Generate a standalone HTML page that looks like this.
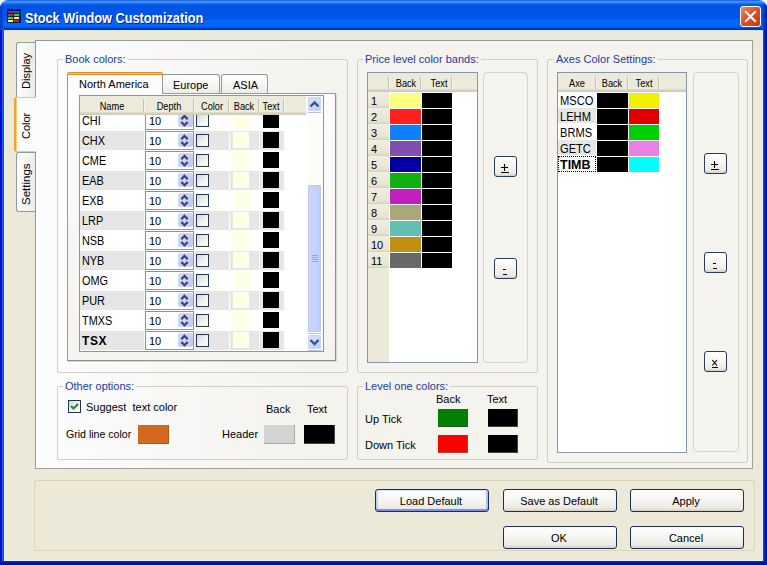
<!DOCTYPE html>
<html><head><meta charset="utf-8">
<style>
*{box-sizing:border-box;margin:0;padding:0}
html,body{width:767px;height:565px;overflow:hidden;background:#FFFFFF}
body{position:relative;font-family:"Liberation Sans",sans-serif;font-size:11px;color:#000}
.a{position:absolute}
.t{position:absolute;white-space:pre;line-height:1}
#frame{left:0;top:30px;width:767px;height:535px;
 background:linear-gradient(to right,#0010C0 0,#0010C0 2px,#2060F5 2px,#2060F5 3px,#1848C8 3px,#1848C8 4px,transparent 4px)}
#title{left:0;top:0;width:767px;height:30px;border-radius:8px 8px 0 0;
 background:linear-gradient(to bottom,#0A47D0 0,#3C8CF8 1px,#3D95FF 2px,#2A7EF5 3px,#1266EC 4px,#0055E5 5px,#0055E5 17px,#0058EE 19px,#0066FF 21px,#0066FF 26px,#0060F5 27px,#0048D6 28px,#0035B0 29px,#0035B0 30px)}
#client{left:4px;top:30px;width:759px;height:531px;background:#ECE9D8;
 border-left:1px solid #F0F4FF;border-top:1px solid #D8E4F8;border-right:1px solid #E8F0FF;border-bottom:1px solid #E8F0FF}
#rightb{left:763px;top:30px;width:4px;height:535px;background:linear-gradient(to right,#1848C8 0,#1040C8 1px,#0018A0 2px,#0010A0 4px)}
#botb{left:0;top:561px;width:767px;height:4px;background:linear-gradient(to bottom,#1848C8 0,#0018A0 1px,#0010A0 4px)}
.grp{position:absolute;border:1px solid #D0CFC6;border-radius:2px}
.gl{position:absolute;white-space:pre;line-height:1;color:#1C3C9E;padding:0 2px;margin-top:-1px}
.tabv{position:absolute;border:1px solid #919B9C;border-right:none;border-radius:3px 0 0 3px;
 background:linear-gradient(to right,#FFFFFF,#ECEBE6)}
.rot{position:absolute;white-space:pre;line-height:1;transform-origin:0 0;transform:rotate(-90deg)}
.htab{position:absolute;border:1px solid #919B9C;border-bottom:none;border-radius:3px 3px 0 0;background:linear-gradient(to bottom,#FFFFFF,#ECEBE6)}
.grid{position:absolute;border:1px solid #8797AB;background:#fff;overflow:hidden}
.hdr{position:absolute;background:#EBEADB}
.hdr:after{content:"";position:absolute;left:0;right:0;bottom:0;height:3px;background:linear-gradient(#E2DFCF,#D6D2C1,#C9C5B3)}
.hdiv{position:absolute;width:2px;background:linear-gradient(to right,#C4C1AE 1px,#F6F5EE 1px)}
.sw{position:absolute}
.btn{position:absolute;border:1px solid #003C74;border-radius:3px;
 background:linear-gradient(to bottom,#FFFFFF 0,#F7F7F4 40%,#ECEBE6 85%,#D6D0C5 100%);text-align:center;line-height:1}
.pnl{position:absolute;border:1px solid #D5D3C6;border-radius:4px}
.cb{position:absolute;width:13px;height:13px;border:1px solid #22384F;background:linear-gradient(135deg,#D2D6DA 0,#F4F4F2 60%,#FFFAF2 100%)}
.spin{position:absolute;width:49px;height:19px;border:1px solid #8294A8;background:#fff}
.spin .v{position:absolute;left:3px;top:4px;white-space:pre;line-height:1}
.spin .b{position:absolute;left:32px;top:1px;width:15px;height:14px;border-radius:2px;background:linear-gradient(135deg,#D6DBF8,#C2C9F2)}
</style></head><body>
<div id="frame" class="a"></div>
<div id="title" class="a"></div>
<div id="rightb" class="a"></div>
<div id="botb" class="a"></div>
<div id="client" class="a"></div>
<div class="a" style="left:0;top:6px;width:4px;height:24px;background:linear-gradient(to right,#0838C0 0,#0A44D4 2px,#0A58EC 4px)"></div>
<div class="a" style="left:762px;top:4px;width:5px;height:26px;background:linear-gradient(to right,#0A5AF0 0,#0046D8 1px,#0030B8 3px,#0020A0 5px);border-top-right-radius:4px"></div>

<!-- title icon -->
<div class="a" style="left:7px;top:9px;width:14px;height:14px;background:#0A1A60;border-radius:1px"></div>
<div class="a" style="left:8px;top:11px;width:12px;height:2px;background:#2D4FA8"></div>
<div class="a" style="left:8px;top:14px;width:5px;height:2px;background:#E02030"></div>
<div class="a" style="left:14px;top:14px;width:5px;height:2px;background:#20E030"></div>
<div class="a" style="left:8px;top:17px;width:5px;height:2px;background:#30E030"></div>
<div class="a" style="left:14px;top:17px;width:5px;height:2px;background:#FFF060"></div>
<div class="a" style="left:8px;top:20px;width:5px;height:2px;background:#FFF060"></div>
<div class="a" style="left:14px;top:20px;width:5px;height:2px;background:#C03010"></div>
<div class="t" style="left:25px;top:10.5px;font-size:14px;transform-origin:0 0;transform:scaleX(0.91);font-weight:bold;color:#fff;text-shadow:1px 1px 0 #0A1E8A">Stock Window Customization</div>
<!-- close button -->
<div class="a" style="left:740px;top:6px;width:21px;height:21px;border:1px solid #fff;border-radius:3px;background:linear-gradient(135deg,#F08A6A 0,#E0502A 45%,#C83810 100%)">
 <svg class="a" style="left:0;top:0" width="19" height="19" viewBox="0 0 19 19"><path d="M5 5 L14 14 M14 5 L5 14" stroke="#fff" stroke-width="2.2" stroke-linecap="square"/></svg>
</div>

<!-- vertical tabs -->
<div class="tabv" style="left:16px;top:42px;width:20px;height:57px"></div>
<div class="rot" style="left:21px;top:89px;">Display</div>
<div class="tabv" style="left:16px;top:152px;width:20px;height:60px"></div>
<div class="rot" style="left:21px;top:205px;font-size:11.5px">Settings</div>

<!-- tab page -->
<div class="a" style="left:35px;top:40px;width:718px;height:429px;border:1px solid #919B9C;border-right:1px solid #A0A09C;border-bottom:1px solid #A0A09C;background:linear-gradient(to right,#FCFCFE 0,#F4F3EE 280px,#F4F3EE 100%)"></div>
<!-- selected Color tab -->
<div class="a" style="left:14px;top:97px;width:23px;height:55px;background:linear-gradient(to right,#FFFFFF,#FCFCFE);border-radius:3px 0 0 3px;border-left:2px solid #EDA43A;box-shadow:inset 1px 0 0 #FFCF6E"></div>
<div class="a" style="left:16px;top:97px;width:20px;height:1px;background:#C8CCC8"></div>
<div class="a" style="left:16px;top:151px;width:20px;height:1px;background:#C8CCC8"></div>
<div class="rot" style="left:21px;top:139px;">Color</div>

<div class="grp" style="left:57px;top:59px;width:291px;height:314px"></div>
<div class="gl" style="left:63px;top:55px;background:#FBFBFB">Book colors:</div>
<div class="htab" style="left:162px;top:74px;width:58px;height:20px"></div>
<div class="t" style="left:173px;top:80px;">Europe</div>
<div class="htab" style="left:221px;top:74px;width:47px;height:20px"></div>
<div class="t" style="left:233px;top:80px;">ASIA</div>
<div class="a" style="left:67px;top:93px;width:269px;height:268px;border:1px solid #919B9C;border-right-color:#8A8F90;border-bottom-color:#8A8F90;box-shadow:1px 1px 0 #D8D8D0;background:linear-gradient(to bottom,#FCFCFE 0,#F4F3EE 100%)"></div>
<div class="a" style="left:67px;top:72px;width:96px;height:22px;border:1px solid #919B9C;border-bottom:none;border-top:none;border-radius:3px 3px 0 0;background:#FCFCFE"></div>
<div class="a" style="left:67px;top:72px;width:96px;height:3px;background:#E68B2C;border-radius:3px 3px 0 0;border-top:1px solid #E68B2C"></div>
<div class="a" style="left:68px;top:73px;width:94px;height:1px;background:#FFC73C"></div>
<div class="t" style="left:79px;top:79px;">North America</div>
<div class="grid" style="left:79px;top:95px;width:245px;height:257px">
<div class="t" style="left:2px;top:19px;font-size:12.5px;transform-origin:0 0;transform:scaleX(0.87);">CHI</div>
<div class="spin" style="left:65px;top:15px"><div class="v">10</div><div class="b"></div><svg class="a" style="left:33px;top:1px" width="13" height="14" viewBox="0 0 13 14"><path d="M2.3 6.2 L5.5 3 L8.7 6.2 M2.3 9 L5.5 12.2 L8.7 9" fill="none" stroke="#3A4674" stroke-width="2.3"/></svg></div>
<div class="cb" style="left:116px;top:18px"></div>
<div class="a" style="left:153px;top:16px;width:16px;height:16px;background:#FFFFE3"></div>
<div class="a" style="left:183px;top:16px;width:16px;height:16px;background:#000"></div>
<div class="a" style="left:0px;top:35px;width:64px;height:19px;background:#E6E6E6"></div>
<div class="a" style="left:115px;top:35px;width:34px;height:19px;background:#E6E6E6"></div>
<div class="a" style="left:150px;top:35px;width:29px;height:19px;background:#E6E6E6"></div>
<div class="a" style="left:180px;top:35px;width:24px;height:19px;background:#E6E6E6"></div>
<div class="t" style="left:2px;top:39px;font-size:12.5px;transform-origin:0 0;transform:scaleX(0.87);">CHX</div>
<div class="spin" style="left:65px;top:35px"><div class="v">10</div><div class="b"></div><svg class="a" style="left:33px;top:1px" width="13" height="14" viewBox="0 0 13 14"><path d="M2.3 6.2 L5.5 3 L8.7 6.2 M2.3 9 L5.5 12.2 L8.7 9" fill="none" stroke="#3A4674" stroke-width="2.3"/></svg></div>
<div class="cb" style="left:116px;top:38px"></div>
<div class="a" style="left:153px;top:36px;width:16px;height:16px;background:#FFFFE3"></div>
<div class="a" style="left:183px;top:36px;width:16px;height:16px;background:#000"></div>
<div class="t" style="left:2px;top:59px;font-size:12.5px;transform-origin:0 0;transform:scaleX(0.87);">CME</div>
<div class="spin" style="left:65px;top:55px"><div class="v">10</div><div class="b"></div><svg class="a" style="left:33px;top:1px" width="13" height="14" viewBox="0 0 13 14"><path d="M2.3 6.2 L5.5 3 L8.7 6.2 M2.3 9 L5.5 12.2 L8.7 9" fill="none" stroke="#3A4674" stroke-width="2.3"/></svg></div>
<div class="cb" style="left:116px;top:58px"></div>
<div class="a" style="left:153px;top:56px;width:16px;height:16px;background:#FFFFE3"></div>
<div class="a" style="left:183px;top:56px;width:16px;height:16px;background:#000"></div>
<div class="a" style="left:0px;top:75px;width:64px;height:19px;background:#E6E6E6"></div>
<div class="a" style="left:115px;top:75px;width:34px;height:19px;background:#E6E6E6"></div>
<div class="a" style="left:150px;top:75px;width:29px;height:19px;background:#E6E6E6"></div>
<div class="a" style="left:180px;top:75px;width:24px;height:19px;background:#E6E6E6"></div>
<div class="t" style="left:2px;top:79px;font-size:12.5px;transform-origin:0 0;transform:scaleX(0.87);">EAB</div>
<div class="spin" style="left:65px;top:75px"><div class="v">10</div><div class="b"></div><svg class="a" style="left:33px;top:1px" width="13" height="14" viewBox="0 0 13 14"><path d="M2.3 6.2 L5.5 3 L8.7 6.2 M2.3 9 L5.5 12.2 L8.7 9" fill="none" stroke="#3A4674" stroke-width="2.3"/></svg></div>
<div class="cb" style="left:116px;top:78px"></div>
<div class="a" style="left:153px;top:76px;width:16px;height:16px;background:#FFFFE3"></div>
<div class="a" style="left:183px;top:76px;width:16px;height:16px;background:#000"></div>
<div class="t" style="left:2px;top:99px;font-size:12.5px;transform-origin:0 0;transform:scaleX(0.87);">EXB</div>
<div class="spin" style="left:65px;top:95px"><div class="v">10</div><div class="b"></div><svg class="a" style="left:33px;top:1px" width="13" height="14" viewBox="0 0 13 14"><path d="M2.3 6.2 L5.5 3 L8.7 6.2 M2.3 9 L5.5 12.2 L8.7 9" fill="none" stroke="#3A4674" stroke-width="2.3"/></svg></div>
<div class="cb" style="left:116px;top:98px"></div>
<div class="a" style="left:153px;top:96px;width:16px;height:16px;background:#FFFFE3"></div>
<div class="a" style="left:183px;top:96px;width:16px;height:16px;background:#000"></div>
<div class="a" style="left:0px;top:115px;width:64px;height:19px;background:#E6E6E6"></div>
<div class="a" style="left:115px;top:115px;width:34px;height:19px;background:#E6E6E6"></div>
<div class="a" style="left:150px;top:115px;width:29px;height:19px;background:#E6E6E6"></div>
<div class="a" style="left:180px;top:115px;width:24px;height:19px;background:#E6E6E6"></div>
<div class="t" style="left:2px;top:119px;font-size:12.5px;transform-origin:0 0;transform:scaleX(0.87);">LRP</div>
<div class="spin" style="left:65px;top:115px"><div class="v">10</div><div class="b"></div><svg class="a" style="left:33px;top:1px" width="13" height="14" viewBox="0 0 13 14"><path d="M2.3 6.2 L5.5 3 L8.7 6.2 M2.3 9 L5.5 12.2 L8.7 9" fill="none" stroke="#3A4674" stroke-width="2.3"/></svg></div>
<div class="cb" style="left:116px;top:118px"></div>
<div class="a" style="left:153px;top:116px;width:16px;height:16px;background:#FFFFE3"></div>
<div class="a" style="left:183px;top:116px;width:16px;height:16px;background:#000"></div>
<div class="t" style="left:2px;top:139px;font-size:12.5px;transform-origin:0 0;transform:scaleX(0.87);">NSB</div>
<div class="spin" style="left:65px;top:135px"><div class="v">10</div><div class="b"></div><svg class="a" style="left:33px;top:1px" width="13" height="14" viewBox="0 0 13 14"><path d="M2.3 6.2 L5.5 3 L8.7 6.2 M2.3 9 L5.5 12.2 L8.7 9" fill="none" stroke="#3A4674" stroke-width="2.3"/></svg></div>
<div class="cb" style="left:116px;top:138px"></div>
<div class="a" style="left:153px;top:136px;width:16px;height:16px;background:#FFFFE3"></div>
<div class="a" style="left:183px;top:136px;width:16px;height:16px;background:#000"></div>
<div class="a" style="left:0px;top:155px;width:64px;height:19px;background:#E6E6E6"></div>
<div class="a" style="left:115px;top:155px;width:34px;height:19px;background:#E6E6E6"></div>
<div class="a" style="left:150px;top:155px;width:29px;height:19px;background:#E6E6E6"></div>
<div class="a" style="left:180px;top:155px;width:24px;height:19px;background:#E6E6E6"></div>
<div class="t" style="left:2px;top:159px;font-size:12.5px;transform-origin:0 0;transform:scaleX(0.87);">NYB</div>
<div class="spin" style="left:65px;top:155px"><div class="v">10</div><div class="b"></div><svg class="a" style="left:33px;top:1px" width="13" height="14" viewBox="0 0 13 14"><path d="M2.3 6.2 L5.5 3 L8.7 6.2 M2.3 9 L5.5 12.2 L8.7 9" fill="none" stroke="#3A4674" stroke-width="2.3"/></svg></div>
<div class="cb" style="left:116px;top:158px"></div>
<div class="a" style="left:153px;top:156px;width:16px;height:16px;background:#FFFFE3"></div>
<div class="a" style="left:183px;top:156px;width:16px;height:16px;background:#000"></div>
<div class="t" style="left:2px;top:179px;font-size:12.5px;transform-origin:0 0;transform:scaleX(0.87);">OMG</div>
<div class="spin" style="left:65px;top:175px"><div class="v">10</div><div class="b"></div><svg class="a" style="left:33px;top:1px" width="13" height="14" viewBox="0 0 13 14"><path d="M2.3 6.2 L5.5 3 L8.7 6.2 M2.3 9 L5.5 12.2 L8.7 9" fill="none" stroke="#3A4674" stroke-width="2.3"/></svg></div>
<div class="cb" style="left:116px;top:178px"></div>
<div class="a" style="left:153px;top:176px;width:16px;height:16px;background:#FFFFE3"></div>
<div class="a" style="left:183px;top:176px;width:16px;height:16px;background:#000"></div>
<div class="a" style="left:0px;top:195px;width:64px;height:19px;background:#E6E6E6"></div>
<div class="a" style="left:115px;top:195px;width:34px;height:19px;background:#E6E6E6"></div>
<div class="a" style="left:150px;top:195px;width:29px;height:19px;background:#E6E6E6"></div>
<div class="a" style="left:180px;top:195px;width:24px;height:19px;background:#E6E6E6"></div>
<div class="t" style="left:2px;top:199px;font-size:12.5px;transform-origin:0 0;transform:scaleX(0.87);">PUR</div>
<div class="spin" style="left:65px;top:195px"><div class="v">10</div><div class="b"></div><svg class="a" style="left:33px;top:1px" width="13" height="14" viewBox="0 0 13 14"><path d="M2.3 6.2 L5.5 3 L8.7 6.2 M2.3 9 L5.5 12.2 L8.7 9" fill="none" stroke="#3A4674" stroke-width="2.3"/></svg></div>
<div class="cb" style="left:116px;top:198px"></div>
<div class="a" style="left:153px;top:196px;width:16px;height:16px;background:#FFFFE3"></div>
<div class="a" style="left:183px;top:196px;width:16px;height:16px;background:#000"></div>
<div class="t" style="left:2px;top:219px;font-size:12.5px;transform-origin:0 0;transform:scaleX(0.87);">TMXS</div>
<div class="spin" style="left:65px;top:215px"><div class="v">10</div><div class="b"></div><svg class="a" style="left:33px;top:1px" width="13" height="14" viewBox="0 0 13 14"><path d="M2.3 6.2 L5.5 3 L8.7 6.2 M2.3 9 L5.5 12.2 L8.7 9" fill="none" stroke="#3A4674" stroke-width="2.3"/></svg></div>
<div class="cb" style="left:116px;top:218px"></div>
<div class="a" style="left:153px;top:216px;width:16px;height:16px;background:#FFFFE3"></div>
<div class="a" style="left:183px;top:216px;width:16px;height:16px;background:#000"></div>
<div class="a" style="left:0px;top:235px;width:64px;height:19px;background:#E6E6E6"></div>
<div class="a" style="left:115px;top:235px;width:34px;height:19px;background:#E6E6E6"></div>
<div class="a" style="left:150px;top:235px;width:29px;height:19px;background:#E6E6E6"></div>
<div class="a" style="left:180px;top:235px;width:24px;height:19px;background:#E6E6E6"></div>
<div class="t" style="left:2px;top:239px;font-size:12px;font-weight:bold;letter-spacing:0.6px;">TSX</div>
<div class="spin" style="left:65px;top:235px"><div class="v">10</div><div class="b"></div><svg class="a" style="left:33px;top:1px" width="13" height="14" viewBox="0 0 13 14"><path d="M2.3 6.2 L5.5 3 L8.7 6.2 M2.3 9 L5.5 12.2 L8.7 9" fill="none" stroke="#3A4674" stroke-width="2.3"/></svg></div>
<div class="cb" style="left:116px;top:238px"></div>
<div class="a" style="left:153px;top:236px;width:16px;height:16px;background:#FFFFE3"></div>
<div class="a" style="left:183px;top:236px;width:16px;height:16px;background:#000"></div>
<div class="hdr" style="left:0;top:0;width:226px;height:19px"></div>
<div class="hdiv" style="left:63px;top:3px;height:13px"></div>
<div class="hdiv" style="left:113px;top:3px;height:13px"></div>
<div class="hdiv" style="left:148px;top:3px;height:13px"></div>
<div class="hdiv" style="left:178px;top:3px;height:13px"></div>
<div class="hdiv" style="left:203px;top:3px;height:13px"></div>
<div class="t" style="left:2px;width:60px;text-align:center;top:6px;font-size:10px;transform:scaleX(0.92)">Name</div>
<div class="t" style="left:59px;width:60px;text-align:center;top:6px;font-size:10px;transform:scaleX(0.92)">Depth</div>
<div class="t" style="left:101.5px;width:60px;text-align:center;top:6px;font-size:10px;transform:scaleX(0.92)">Color</div>
<div class="t" style="left:134px;width:60px;text-align:center;top:6px;font-size:10px;transform:scaleX(0.92)">Back</div>
<div class="t" style="left:161px;width:60px;text-align:center;top:6px;font-size:10px;transform:scaleX(0.92)">Text</div>
<div class="a" style="left:226px;top:0px;width:17px;height:255px;background:#FCFCF9"></div>
<div class="a" style="left:227px;top:0px;width:15px;height:16px;border:1px solid #fff;border-radius:2px;box-shadow:inset 0 0 0 1px #C8D4F4,0 1px 0 #B8C4DC;background:linear-gradient(135deg,#DCE5FD 0,#C6D5FD 60%,#B7C9F5 100%)"><svg class="a" style="left:-1px;top:-1px" width="15" height="16" viewBox="0 0 15 16"><path d="M3.5 10.5 L7.5 6.5 L11.5 10.5" fill="none" stroke="#3F5080" stroke-width="2.3"/></svg></div>
<div class="a" style="left:227px;top:238px;width:15px;height:16px;border:1px solid #fff;border-radius:2px;box-shadow:inset 0 0 0 1px #C8D4F4,0 1px 0 #B8C4DC;background:linear-gradient(135deg,#DCE5FD 0,#C6D5FD 60%,#B7C9F5 100%)"><svg class="a" style="left:-1px;top:-1px" width="15" height="16" viewBox="0 0 15 16"><path d="M3.5 6 L7.5 10 L11.5 6" fill="none" stroke="#3F5080" stroke-width="2.3"/></svg></div>
<div class="a" style="left:227px;top:88px;width:15px;height:149px;border:1px solid #fff;border-radius:2px;box-shadow:inset 0 0 0 1px #B9C9F0,0 1px 0 #B8C4DC;background:linear-gradient(to right,#CAD4FA 0,#C6D3FC 50%,#B9CCF9 100%)"></div>
<div class="a" style="left:232px;top:159px;width:6px;height:1px;background:#8CA6E8"></div>
<div class="a" style="left:232px;top:161px;width:6px;height:1px;background:#8CA6E8"></div>
<div class="a" style="left:232px;top:163px;width:6px;height:1px;background:#8CA6E8"></div>
<div class="a" style="left:232px;top:165px;width:6px;height:1px;background:#8CA6E8"></div>
</div>
<div class="grp" style="left:57px;top:386px;width:291px;height:74px"></div>
<div class="gl" style="left:63px;top:382px;background:#F9F9F8">Other options:</div>
<div class="cb" style="left:68px;top:400px"></div>
<svg class="a" style="left:68px;top:400px" width="13" height="13" viewBox="0 0 13 13"><path d="M3 6 L5.5 8.5 L10 4" fill="none" stroke="#2A8A3A" stroke-width="2.2"/></svg>
<div class="t" style="left:86px;top:402px;">Suggest  text color</div>
<div class="t" style="left:66px;top:429px;transform-origin:0 0;transform:scaleX(0.96)">Grid line color</div>
<div class="a" style="left:138px;top:425px;width:31px;height:19px;background:#D2691E;border-right:1px solid #A85A20;border-bottom:1px solid #A85A20"></div>
<div class="t" style="left:266px;top:404px;">Back</div>
<div class="t" style="left:307px;top:404px;">Text</div>
<div class="t" style="left:222px;top:429px;">Header</div>
<div class="a" style="left:264px;top:425px;width:31px;height:19px;background:#D3D3D3;border-right:1px solid #A8A8A8;border-bottom:1px solid #A8A8A8"></div>
<div class="a" style="left:304px;top:425px;width:31px;height:19px;background:#000;border-right:1px solid #444;border-bottom:1px solid #444"></div>
<div class="grp" style="left:357px;top:59px;width:181px;height:314px"></div>
<div class="gl" style="left:363px;top:55px;background:#F4F3EE">Price level color bands:</div>
<div class="grid" style="left:367px;top:72px;width:111px;height:291px">
<div class="a" style="left:0px;top:0px;width:21px;height:289px;background:#ECE9D8"></div>
<div class="a" style="left:0px;top:19px;width:21px;height:16px;background:linear-gradient(to bottom,#F0EEE0 0,#E8E5D4 80%,#D6D2BF 100%)"></div>
<div class="t" style="left:3px;top:23px;font-size:11px">1</div>
<div class="a" style="left:22px;top:20px;width:31px;height:15px;background:#FFFF80"></div>
<div class="a" style="left:54px;top:20px;width:30px;height:15px;background:#000"></div>
<div class="a" style="left:0px;top:35px;width:21px;height:16px;background:linear-gradient(to bottom,#F0EEE0 0,#E8E5D4 80%,#D6D2BF 100%)"></div>
<div class="t" style="left:3px;top:39px;font-size:11px">2</div>
<div class="a" style="left:22px;top:36px;width:31px;height:15px;background:#FF2020"></div>
<div class="a" style="left:54px;top:36px;width:30px;height:15px;background:#000"></div>
<div class="a" style="left:0px;top:51px;width:21px;height:16px;background:linear-gradient(to bottom,#F0EEE0 0,#E8E5D4 80%,#D6D2BF 100%)"></div>
<div class="t" style="left:3px;top:55px;font-size:11px">3</div>
<div class="a" style="left:22px;top:52px;width:31px;height:15px;background:#1080FF"></div>
<div class="a" style="left:54px;top:52px;width:30px;height:15px;background:#000"></div>
<div class="a" style="left:0px;top:67px;width:21px;height:16px;background:linear-gradient(to bottom,#F0EEE0 0,#E8E5D4 80%,#D6D2BF 100%)"></div>
<div class="t" style="left:3px;top:71px;font-size:11px">4</div>
<div class="a" style="left:22px;top:68px;width:31px;height:15px;background:#8050B0"></div>
<div class="a" style="left:54px;top:68px;width:30px;height:15px;background:#000"></div>
<div class="a" style="left:0px;top:83px;width:21px;height:16px;background:linear-gradient(to bottom,#F0EEE0 0,#E8E5D4 80%,#D6D2BF 100%)"></div>
<div class="t" style="left:3px;top:87px;font-size:11px">5</div>
<div class="a" style="left:22px;top:84px;width:31px;height:15px;background:#0000A0"></div>
<div class="a" style="left:54px;top:84px;width:30px;height:15px;background:#000"></div>
<div class="a" style="left:0px;top:99px;width:21px;height:16px;background:linear-gradient(to bottom,#F0EEE0 0,#E8E5D4 80%,#D6D2BF 100%)"></div>
<div class="t" style="left:3px;top:103px;font-size:11px">6</div>
<div class="a" style="left:22px;top:100px;width:31px;height:15px;background:#10B010"></div>
<div class="a" style="left:54px;top:100px;width:30px;height:15px;background:#000"></div>
<div class="a" style="left:0px;top:115px;width:21px;height:16px;background:linear-gradient(to bottom,#F0EEE0 0,#E8E5D4 80%,#D6D2BF 100%)"></div>
<div class="t" style="left:3px;top:119px;font-size:11px">7</div>
<div class="a" style="left:22px;top:116px;width:31px;height:15px;background:#C020C0"></div>
<div class="a" style="left:54px;top:116px;width:30px;height:15px;background:#000"></div>
<div class="a" style="left:0px;top:131px;width:21px;height:16px;background:linear-gradient(to bottom,#F0EEE0 0,#E8E5D4 80%,#D6D2BF 100%)"></div>
<div class="t" style="left:3px;top:135px;font-size:11px">8</div>
<div class="a" style="left:22px;top:132px;width:31px;height:15px;background:#A8A878"></div>
<div class="a" style="left:54px;top:132px;width:30px;height:15px;background:#000"></div>
<div class="a" style="left:0px;top:147px;width:21px;height:16px;background:linear-gradient(to bottom,#F0EEE0 0,#E8E5D4 80%,#D6D2BF 100%)"></div>
<div class="t" style="left:3px;top:151px;font-size:11px">9</div>
<div class="a" style="left:22px;top:148px;width:31px;height:15px;background:#60C0B0"></div>
<div class="a" style="left:54px;top:148px;width:30px;height:15px;background:#000"></div>
<div class="a" style="left:0px;top:163px;width:21px;height:16px;background:linear-gradient(to bottom,#F0EEE0 0,#E8E5D4 80%,#D6D2BF 100%)"></div>
<div class="t" style="left:3px;top:167px;font-size:11px">10</div>
<div class="a" style="left:22px;top:164px;width:31px;height:15px;background:#C09010"></div>
<div class="a" style="left:54px;top:164px;width:30px;height:15px;background:#000"></div>
<div class="a" style="left:0px;top:179px;width:21px;height:16px;background:linear-gradient(to bottom,#F0EEE0 0,#E8E5D4 80%,#D6D2BF 100%)"></div>
<div class="t" style="left:3px;top:183px;font-size:11px">11</div>
<div class="a" style="left:22px;top:180px;width:31px;height:15px;background:#686868"></div>
<div class="a" style="left:54px;top:180px;width:30px;height:15px;background:#000"></div>
<div class="hdr" style="left:0;top:0;width:109px;height:19px"></div>
<div class="hdiv" style="left:20px;top:3px;height:13px"></div>
<div class="hdiv" style="left:52px;top:3px;height:13px"></div>
<div class="hdiv" style="left:83px;top:3px;height:13px"></div>
<div class="t" style="left:8px;width:60px;text-align:center;top:6px;font-size:10px;transform:scaleX(0.92)">Back</div>
<div class="t" style="left:40.5px;width:60px;text-align:center;top:6px;font-size:10px;transform:scaleX(0.92)">Text</div>
</div>
<div class="pnl" style="left:483px;top:72px;width:45px;height:291px"></div>
<div class="btn" style="left:494px;top:156px;width:23px;height:21px;border-color:#283C58"></div>
<svg class="a" style="left:494px;top:156px" width="23" height="21"><path d="M7 11.5 H14 M10.5 8 V15 M7 16.5 H15" stroke="#000" stroke-width="1.1"/></svg>
<div class="btn" style="left:494px;top:258px;width:23px;height:21px;border-color:#283C58"></div>
<svg class="a" style="left:494px;top:258px" width="23" height="21"><path d="M9 11.5 H12 M9 16.5 H13" stroke="#000" stroke-width="1.2"/></svg>
<div class="grp" style="left:357px;top:386px;width:181px;height:74px"></div>
<div class="gl" style="left:363px;top:382px;background:#F4F3EE">Level one colors:</div>
<div class="t" style="left:436px;top:394px;">Back</div>
<div class="t" style="left:487px;top:394px;">Text</div>
<div class="t" style="left:365px;top:414px;">Up Tick</div>
<div class="t" style="left:365px;top:440px;">Down Tick</div>
<div class="a" style="left:438px;top:409px;width:30px;height:18px;background:#008000;border-right:1px solid #305830;border-bottom:1px solid #305830"></div>
<div class="a" style="left:488px;top:409px;width:30px;height:18px;background:#000;border-right:1px solid #444;border-bottom:1px solid #444"></div>
<div class="a" style="left:438px;top:435px;width:30px;height:18px;background:#FF0000;border-right:1px solid #B04040;border-bottom:1px solid #B04040"></div>
<div class="a" style="left:488px;top:435px;width:30px;height:18px;background:#000;border-right:1px solid #444;border-bottom:1px solid #444"></div>
<div class="grp" style="left:547px;top:59px;width:201px;height:404px"></div>
<div class="gl" style="left:554px;top:55px;background:#F4F3EE">Axes Color Settings:</div>
<div class="grid" style="left:557px;top:72px;width:130px;height:381px">
<div class="t" style="left:2px;top:22px;font-size:12.5px;transform-origin:0 0;transform:scaleX(0.89)">MSCO</div>
<div class="a" style="left:39px;top:20px;width:31px;height:15px;background:#000"></div>
<div class="a" style="left:71px;top:20px;width:30px;height:15px;background:#F0F000"></div>
<div class="a" style="left:0px;top:35px;width:38px;height:15px;background:#E6E6E6"></div>
<div class="t" style="left:2px;top:38px;font-size:12.5px;transform-origin:0 0;transform:scaleX(0.89)">LEHM</div>
<div class="a" style="left:39px;top:36px;width:31px;height:15px;background:#000"></div>
<div class="a" style="left:71px;top:36px;width:30px;height:15px;background:#E00000"></div>
<div class="t" style="left:2px;top:54px;font-size:12.5px;transform-origin:0 0;transform:scaleX(0.89)">BRMS</div>
<div class="a" style="left:39px;top:52px;width:31px;height:15px;background:#000"></div>
<div class="a" style="left:71px;top:52px;width:30px;height:15px;background:#00D000"></div>
<div class="a" style="left:0px;top:67px;width:38px;height:15px;background:#E6E6E6"></div>
<div class="t" style="left:2px;top:70px;font-size:12.5px;transform-origin:0 0;transform:scaleX(0.89)">GETC</div>
<div class="a" style="left:39px;top:68px;width:31px;height:15px;background:#000"></div>
<div class="a" style="left:71px;top:68px;width:30px;height:15px;background:#E880E8"></div>
<div class="a" style="left:0px;top:83px;width:38px;height:16px;border:1px dotted #000"></div>
<div class="t" style="left:2px;top:86px;font-size:12.5px;font-weight:bold">TIMB</div>
<div class="a" style="left:39px;top:84px;width:31px;height:15px;background:#000"></div>
<div class="a" style="left:71px;top:84px;width:30px;height:15px;background:#00FFFF"></div>
<div class="hdr" style="left:0;top:0;width:128px;height:19px"></div>
<div class="hdiv" style="left:37px;top:3px;height:13px"></div>
<div class="hdiv" style="left:69px;top:3px;height:13px"></div>
<div class="hdiv" style="left:100px;top:3px;height:13px"></div>
<div class="t" style="left:-11px;width:60px;text-align:center;top:6px;font-size:10px;transform:scaleX(0.92)">Axe</div>
<div class="t" style="left:24px;width:60px;text-align:center;top:6px;font-size:10px;transform:scaleX(0.92)">Back</div>
<div class="t" style="left:56px;width:60px;text-align:center;top:6px;font-size:10px;transform:scaleX(0.92)">Text</div>
</div>
<div class="pnl" style="left:693px;top:72px;width:46px;height:380px"></div>
<div class="btn" style="left:704px;top:153px;width:23px;height:21px;border-color:#283C58"></div>
<svg class="a" style="left:704px;top:153px" width="23" height="21"><path d="M7 11.5 H14 M10.5 8 V15 M7 16.5 H15" stroke="#000" stroke-width="1.1"/></svg>
<div class="btn" style="left:704px;top:252px;width:23px;height:21px;border-color:#283C58"></div>
<svg class="a" style="left:704px;top:252px" width="23" height="21"><path d="M9 11.5 H12 M9 16.5 H13" stroke="#000" stroke-width="1.2"/></svg>
<div class="btn" style="left:704px;top:351px;width:23px;height:21px;border-color:#283C58"></div>
<svg class="a" style="left:704px;top:351px" width="23" height="21"><path d="M8.3 9 L13 14.5 M13 9 L8.3 14.5 M8 16.5 H14" stroke="#000" stroke-width="1.1"/></svg>
<div class="grp" style="left:34px;top:480px;width:721px;height:71px;border-color:#D8D4C0"></div>
<div class="btn" style="left:375px;top:489px;width:114px;height:23px;border-color:#1B2F55;box-shadow:inset 0 1px 0 #CEE7FF,inset 0 -2px 0 #7A92E8,inset 2px 0 0 #BCD4FA,inset -2px 0 0 #A6C0F6;"></div>
<div class="t" style="left:374px;top:496px;width:114px;text-align:center;">Load Default</div>
<div class="btn" style="left:503px;top:489px;width:114px;height:23px;border-color:#1B2F55;"></div>
<div class="t" style="left:502px;top:496px;width:114px;text-align:center;">Save as Default</div>
<div class="btn" style="left:630px;top:489px;width:114px;height:23px;border-color:#1B2F55;"></div>
<div class="t" style="left:629px;top:496px;width:114px;text-align:center;">Apply</div>
<div class="btn" style="left:503px;top:526px;width:114px;height:23px;border-color:#1B2F55;"></div>
<div class="t" style="left:502px;top:533px;width:114px;text-align:center;">OK</div>
<div class="btn" style="left:630px;top:526px;width:114px;height:23px;border-color:#1B2F55;"></div>
<div class="t" style="left:629px;top:533px;width:114px;text-align:center;">Cancel</div>
</body></html>
